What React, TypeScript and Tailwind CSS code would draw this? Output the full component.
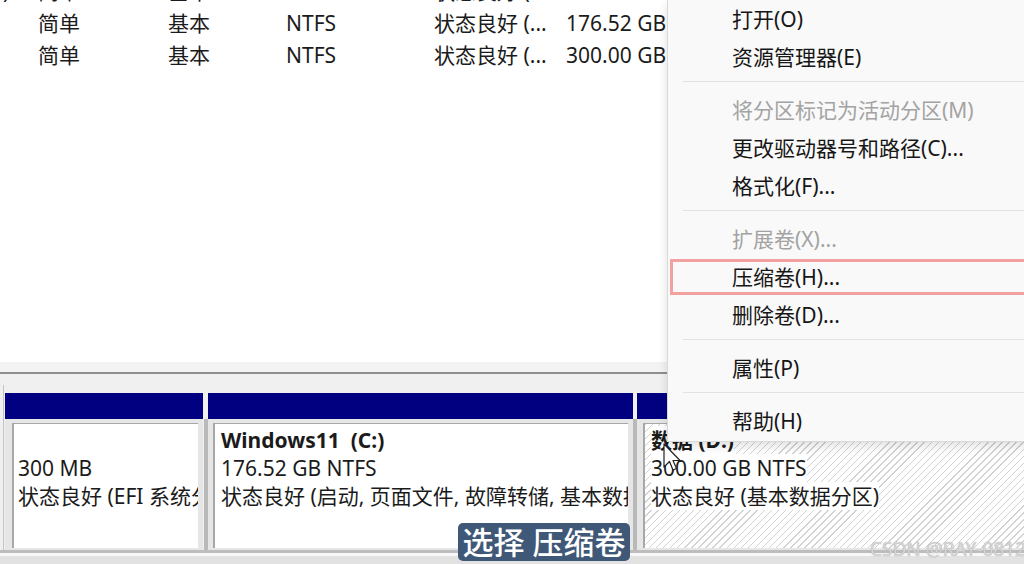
import React from 'react';

type MenuEntry = { label: string; disabled?: boolean; highlight?: boolean } | 'sep';

const menuItems: MenuEntry[] = [
  { label: '打开(O)' },
  { label: '资源管理器(E)' },
  'sep',
  { label: '将分区标记为活动分区(M)', disabled: true },
  { label: '更改驱动器号和路径(C)...' },
  { label: '格式化(F)...' },
  'sep',
  { label: '扩展卷(X)...', disabled: true },
  { label: '压缩卷(H)...', highlight: true },
  { label: '删除卷(D)...' },
  'sep',
  { label: '属性(P)' },
  'sep',
  { label: '帮助(H)' },
];

const volumes = [
  [')', '简单', '基本', '', '状态良好 (...', '300 MB'],
  ['', '简单', '基本', 'NTFS', '状态良好 (...', '176.52 GB'],
  ['', '简单', '基本', 'NTFS', '状态良好 (...', '300.00 GB'],
];

const ContextMenu: React.FC = () => (
  <div className="absolute left-[667px] top-0 w-[380px] bg-[#f9f9f9] border-l border-b border-[#d9d9d9] shadow-[0_4px_10px_rgba(0,0,0,0.12)] pb-[1px] text-[21px] leading-none">
    {menuItems.map((item, i) =>
      item === 'sep' ? (
        <div key={i} className="h-[15px] pt-[5px] pl-[15px]">
          <div className="h-px bg-[#e2e2e2]" />
        </div>
      ) : (
        <div
          key={i}
          className={`relative h-[38px] flex items-center pl-[64px] ${item.disabled ? 'text-[#a3a3a3]' : 'text-[#161616]'}`}
        >
          {item.label}
          {item.highlight && (
            <span className="absolute left-[2px] -right-[4px] top-px bottom-px border-[3px] border-[#f3a0a0]" />
          )}
        </div>
      )
    )}
  </div>
);

const Column: React.FC<{ width: string; pad: string; hatched?: boolean; children: React.ReactNode }> = ({
  width,
  pad,
  hatched,
  children,
}) => (
  <div className={`flex flex-col shrink-0 ${width}`}>
    <div className="h-[26px] bg-[#000080]" />
    <div className={`flex-1 bg-[#e6e6e6] pt-[4px] pb-[2px] ${pad}`}>
      <div
        className={`h-full overflow-hidden border-l-2 border-t border-[#a8a8a8] pt-[2px] text-[21px] leading-[28px] whitespace-nowrap ${
          hatched
            ? 'bg-[repeating-linear-gradient(135deg,#d2d2d2_0px,#d2d2d2_1px,#ffffff_1px,#ffffff_5px)]'
            : 'bg-white'
        }`}
      >
        {children}
      </div>
    </div>
  </div>
);

const Divider: React.FC = () => (
  <div className="flex flex-col w-[4px] shrink-0">
    <div className="h-[26px]" />
    <div className="flex-1 bg-[#b9b9b9]" />
  </div>
);

export default function App() {
  return (
    <div className="relative w-[1024px] h-[564px] overflow-hidden bg-white font-['Noto_Sans','Noto_Sans_CJK_SC',sans-serif] text-[#1b1b1b]">
      {/* volume list */}
      <div className="h-[362px] overflow-hidden">
        <div className="-mt-[24px]">
          {volumes.map((row, r) => (
            <div
              key={r}
              className="grid grid-cols-[38px_130px_118px_148px_132px_1fr] h-[32px] items-center text-[21px] whitespace-nowrap"
            >
              {row.map((cell, c) => (
                <span key={c} className={c === 0 ? 'pl-[3px]' : ''}>
                  {cell}
                </span>
              ))}
            </div>
          ))}
        </div>
      </div>

      {/* splitter */}
      <div className="h-[10px] bg-[#f3f3f3]" />
      <div className="h-[2px] bg-[#8e8e8e]" />

      {/* disk map */}
      <div className="h-[176px] bg-[#f0f0f0] pl-[3px] pt-[11px]">
        <div className="h-full border-l border-[#c4c4c4] pt-[8px] pl-[1px] flex">
          <Column width="w-[198px]" pad="pl-[7px] pr-[5px]">
            <div className="pl-[4px]">
              <div className="h-[28px]" />
              <div>300 MB</div>
              <div>状态良好 (EFI 系统分区)</div>
            </div>
          </Column>
          <div className="w-[1px] shrink-0" />
          <Divider />
          <Column width="w-[425px]" pad="px-[5px]">
            <div className="pl-[6px]">
              <div className="font-bold whitespace-pre">Windows11  (C:)</div>
              <div>176.52 GB NTFS</div>
              <div>状态良好 (启动, 页面文件, 故障转储, 基本数据分区)</div>
            </div>
          </Column>
          <Divider />
          <Column width="w-[400px]" pad="pl-[6px]" hatched>
            <div className="pl-[6px] flex flex-col items-start">
              <span className="bg-white font-bold">数据 (D:)</span>
              <span className="bg-white">300.00 GB NTFS</span>
              <span className="bg-white">状态良好 (基本数据分区)</span>
            </div>
          </Column>
        </div>
      </div>
      <div className="h-[3px] bg-[#bdbdbd]" />
      <div className="h-[3px] bg-[#f8f8f8]" />
      <div className="h-[10px] bg-[#e2e2e2]" />

      <ContextMenu />

      {/* mouse pointer */}
      <svg className="absolute left-[663px] top-[443px]" width="18" height="30" viewBox="0 0 18 30">
        <path d="M1 1 L1 24 L6.5 18.5 L10 27 L13.5 25.5 L10 17.5 L17 17.5 Z" fill="white" stroke="#222" strokeWidth="1.2" strokeLinejoin="round" />
      </svg>

      {/* caption */}
      <div className="absolute left-[458px] top-[523px] w-[172px] h-[38px] rounded-[5px] bg-[#3f5877] text-white text-[31px] font-medium flex items-center justify-center leading-none whitespace-pre">
        选择 压缩卷
      </div>

      {/* watermark */}
      <div className="absolute left-[870px] top-[535px] text-[19px] text-[#d6d6d6] whitespace-nowrap [text-shadow:0_0_1px_#a0a0a0]">
        CSDN @RAY-0812
      </div>
    </div>
  );
}
